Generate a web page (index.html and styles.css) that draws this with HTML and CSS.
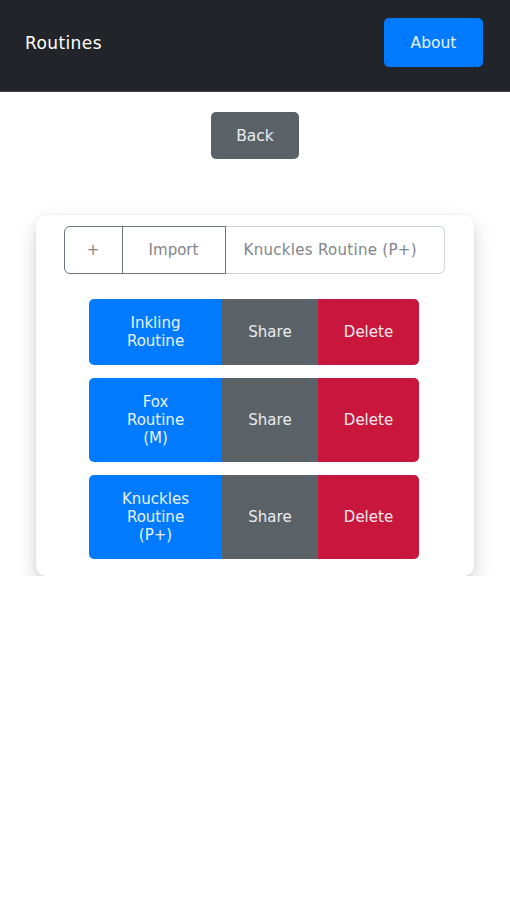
FILE: index.html
```html
<!DOCTYPE html>
<html>
<head>
<meta charset="utf-8">
<link rel="stylesheet" href="styles.css">
</head>
<body>
<nav class="navbar">
  <span class="brand">Routines</span>
  <button class="btn btn-primary about">About</button>
</nav>
<main class="main">
  <button class="btn btn-secondary back">Back</button>
  <section class="card">
    <div class="input-group">
      <button class="ig-btn plus">+</button>
      <button class="ig-btn import">Import</button>
      <input class="ig-input" type="text" value="Knuckles Routine (P+)">
    </div>
    <div class="routines">
      <div class="routine">
        <button class="r-btn r-name">Inkling<br>Routine</button>
        <button class="r-btn r-share">Share</button>
        <button class="r-btn r-delete">Delete</button>
      </div>
      <div class="routine">
        <button class="r-btn r-name">Fox<br>Routine<br>(M)</button>
        <button class="r-btn r-share">Share</button>
        <button class="r-btn r-delete">Delete</button>
      </div>
      <div class="routine">
        <button class="r-btn r-name">Knuckles<br>Routine<br>(P+)</button>
        <button class="r-btn r-share">Share</button>
        <button class="r-btn r-delete">Delete</button>
      </div>
    </div>
  </section>
</main>
</body>
</html>
```
FILE: styles.css
```css
* { box-sizing: border-box; }
body {
  margin: 0;
  background: #ffffff;
  font-family: "DejaVu Sans", "Open Sans", sans-serif;
  color: #212529;
}
.navbar {
  height: 92px;
  background: #212529;
  display: flex;
  align-items: center;
  justify-content: space-between;
  padding: 0 27px 6px 25px;
  border-bottom: 1px solid #3a3f44;
}
.brand {
  color: #ffffff;
  font-size: 17px;
  letter-spacing: 0.4px;
}
.btn {
  font-family: inherit;
  border: none;
  color: #ffffff;
  font-size: 15.5px;
  border-radius: 5px;
  cursor: pointer;
}
.btn-primary { background: #007bff; color: #e8f1ff; }
.btn-secondary { background: #5a6268; }
.about {
  width: 99px;
  height: 49px;
}
.main {
  display: flex;
  flex-direction: column;
  align-items: center;
  padding-top: 20px;
}
.back {
  width: 88px;
  height: 47px;
  color: #e9ecef;
}
.card {
  margin-top: 56px;
  width: 438px;
  background: #ffffff;
  border-radius: 10px;
  box-shadow: 0 10px 20px rgba(0, 0, 0, 0.18), 0 0 4px rgba(0, 0, 0, 0.05);
  padding: 11px 0 17px 0;
  display: flex;
  flex-direction: column;
  align-items: center;
}
.input-group {
  display: flex;
  width: 381px;
  height: 48px;
  margin-left: -2px;
}
.ig-btn {
  font-family: inherit;
  background: #ffffff;
  color: #80858a;
  font-size: 15px;
  border: 1px solid #6c757d;
  height: 100%;
}
.plus {
  width: 59px;
  border-radius: 6px 0 0 6px;
}
.import {
  width: 104px;
  margin-left: -1px;
}
.ig-input {
  flex: 1;
  min-width: 0;
  font-family: inherit;
  font-size: 15px;
  letter-spacing: 0.3px;
  color: #80858a;
  border: 1px solid #ced4da;
  border-left: none;
  border-radius: 0 6px 6px 0;
  padding: 0 18px;
  outline: none;
}
.routines {
  margin-top: 25px;
  display: flex;
  flex-direction: column;
  gap: 13px;
}
.routine {
  display: flex;
  width: 330px;
  border-radius: 5px;
  overflow: hidden;
  margin-left: -2px;
}
.r-btn {
  font-family: inherit;
  border: none;
  color: #ffffff;
  font-size: 15px;
  line-height: 18px;
  padding: 15px 4px;
}
.r-name { width: 133px; background: #007bff; color: #eaf3ff; }
.r-share { width: 96px; background: #5a6268; color: #e9ecef; }
.r-delete { width: 101px; background: #c8163c; color: #fbe9ed; }
```
